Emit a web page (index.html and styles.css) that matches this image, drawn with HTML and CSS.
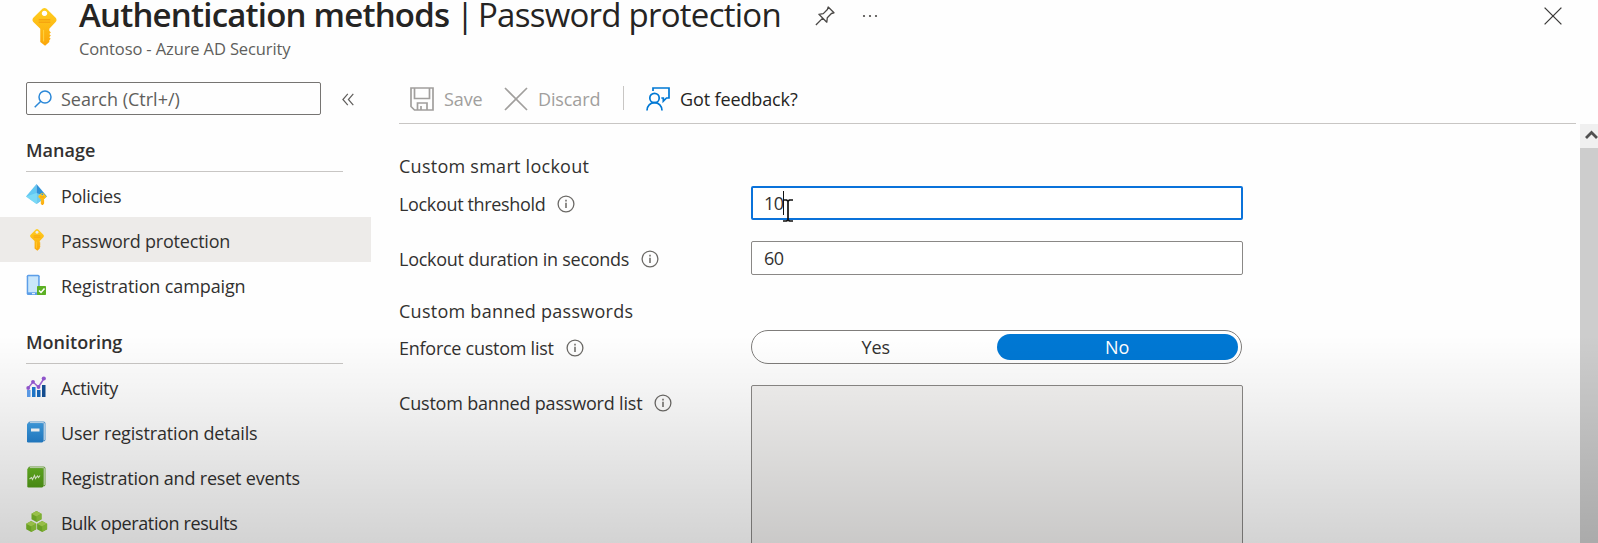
FILE: index.html
```html
<!DOCTYPE html>
<html lang="en">
<head>
<meta charset="utf-8">
<title>Authentication methods | Password protection</title>
<link rel="stylesheet" href="styles.css">
</head>
<body>
<svg class="defs" width="0" height="0">
  <defs>
    <linearGradient id="gold" x1="0" y1="0" x2="0" y2="1"><stop offset="0" stop-color="#ffce1f"/><stop offset="1" stop-color="#fba60a"/></linearGradient>
    <linearGradient id="blue" x1="0" y1="0" x2="0" y2="1"><stop offset="0" stop-color="#3f9fe4"/><stop offset="1" stop-color="#2380cd"/></linearGradient>
    <linearGradient id="green" x1="0" y1="0" x2="0" y2="1"><stop offset="0" stop-color="#66b522"/><stop offset="1" stop-color="#519a17"/></linearGradient>
    <symbol id="key" viewBox="0 0 26 40">
      <path fill="url(#gold)" fill-rule="evenodd" d="M10.800 1 Q13 -.6 15.200 1 L24.600 10.400 Q26.400 12.600 24.600 14.800 L18 21.800 V24 L19.600 25.600 L18 27.200 L19.600 28.900 L18 30.600 L19.400 32.200 L18 33.800 V35.600 L13.600 39.600 L8.600 35.600 V21.800 L1.400 14.800 Q-.4 12.600 1.400 10.400 Z M13 3 a2.800 2.800 0 1 0 .01 0Z"/>
      <path stroke="#f6a50f" stroke-width="1.600" d="M7 12.400H19M7 15H19"/>
      <path stroke="#ffcf3c" stroke-width="1.200" d="M12 23V35"/>
    </symbol>
    <symbol id="info" viewBox="0 0 18 18">
      <circle cx="9" cy="9" r="7.900" fill="none" stroke="#6b6966" stroke-width="1.300"/>
      <path d="M9 7.700V13M9 4.800V6.400" stroke="#7b7976" stroke-width="1.700"/>
    </symbol>
  </defs>
</svg>
<div class="blade">
  <header class="header">
    <svg class="header-key"><use href="#key"/></svg>
    <div class="heading">
      <h1 class="title"><span class="title-strong">Authentication methods</span><span class="title-bar">|</span><span class="title-page">Password protection</span></h1>
      <p class="subtitle">Contoso - Azure AD Security</p>
    </div>
    <svg class="pin" viewBox="0 0 20 20" fill="none" stroke="#4a4846" stroke-width="1.300" stroke-linejoin="round"><path d="M13.200 1 19 6.800 16.400 7.500 12.300 11.700 11.800 16.200 3.900 8.300 8.300 7.600 12.400 3.500ZM7.700 12.100 .9 19"/></svg>
    <svg class="dots" viewBox="0 0 16 4" fill="#4a4846"><circle cx="2" cy="2" r="1.100"/><circle cx="8" cy="2" r="1.100"/><circle cx="14" cy="2" r="1.100"/></svg>
    <svg class="close" viewBox="0 0 18 18" stroke="#3b3a39" stroke-width="1.300"><path d="M.6.600 17.400 17.400M17.400.6.600 17.400"/></svg>
  </header>

  <div class="body">
    <nav class="sidebar">
      <div class="search-row">
        <div class="search">
          <svg class="search-icon" viewBox="0 0 18 18" fill="none" stroke="#2b88d8" stroke-width="1.500"><circle cx="11" cy="7" r="6"/><path d="M6.800 11.200.7 17.300"/></svg>
          <span class="search-text">Search (Ctrl+/)</span>
        </div>
        <svg class="collapse" viewBox="0 0 12 13" fill="none" stroke="#605e5c" stroke-width="1.200"><path d="M5.800.8.900 6.500 5.800 12.200M11.300.8 6.400 6.500 11.300 12.200"/></svg>
      </div>

      <h2 class="group">Manage</h2>
      <ul class="menu">
        <li class="item"><svg class="icon" viewBox="0 0 22 22"><path d="M10.500 0 0 12.500 10.500 20Z" fill="#62c8f2"/><path d="M10.500 0 21 12.500 10.500 20Z" fill="#2f91d8"/><path d="M0 12.500 10.500 9 21 12.500 10.500 20Z" fill="#83dff7" opacity=".75"/><svg x="11.500" y="8.500" width="9.500" height="13"><use href="#key"/></svg></svg><span class="t-policies">Policies</span></li>
        <li class="item selected"><svg class="icon"><use href="#key"/></svg><span class="t-pp">Password protection</span></li>
        <li class="item"><svg class="icon" viewBox="0 0 22 22"><rect x=".7" y=".7" width="13" height="20.300" rx="1.500" fill="#5c9ee8"/><rect x="2.200" y="2.300" width="10" height="16" fill="#c9e6fb"/><path d="M6 19.700H9" stroke="#fff"/><rect x="11" y="12" width="9" height="9" rx=".7" fill="#5cb024"/><path d="m13 16.500 2 2 3.500-4" fill="none" stroke="#fff" stroke-width="1.500"/></svg><span class="t-campaign">Registration campaign</span></li>
      </ul>

      <h2 class="group monitoring">Monitoring</h2>
      <ul class="menu">
        <li class="item"><svg class="icon" viewBox="0 0 22 22"><path d="M1 14h3.500v7H1z" fill="#5ea0ef"/><path d="M6 11h3.500v10H6z" fill="#1f7ad0"/><path d="M11 14h3.500v7H11z" fill="#1769bd"/><path d="M16 9h3.500v12H16z" fill="#134f95"/><path d="M2 12 7 6 12.500 11 18 2.500" fill="none" stroke="#a067d8" stroke-width="1.500"/><g fill="#9457d2"><circle cx="2.200" cy="12" r="1.900"/><circle cx="7" cy="5.800" r="1.900"/><circle cx="12.500" cy="11" r="1.900"/><circle cx="17.800" cy="2.500" r="2.100"/></g></svg><span class="t-activity">Activity</span></li>
        <li class="item"><svg class="icon" viewBox="0 0 22 22"><rect x="2" y=".5" width="17.500" height="20" rx="2" fill="#5b9fd8"/><path d="M4 1.700h13.500q.8 0 .8.800V19" fill="none" stroke="#d6eafa"/><rect x="1" y="2.200" width="16" height="19.300" rx="1.200" fill="url(#blue)"/><path d="M5 9h8.500" stroke="#fff" stroke-width="3"/></svg><span class="t-user">User registration details</span></li>
        <li class="item"><svg class="icon" viewBox="0 0 22 22"><rect x="2" y=".5" width="17.500" height="20" rx="2" fill="#76b046"/><path d="M4 1.700h13.500q.8 0 .8.800V19" fill="none" stroke="#dceccb"/><rect x="1.300" y="2.200" width="15.700" height="19.300" rx="1.200" fill="url(#green)"/><path d="m3.500 13 2-1.500 1 2 2-4 1 3 2-2.500 1 1.500 1.500-2" fill="none" stroke="#e9f7d9" stroke-width="1.100"/></svg><span class="t-reg">Registration and reset events</span></li>
        <li class="item"><svg class="icon" viewBox="0 0 22 22"><g id="cube"><path d="m10.500 0 5 2.700v5.600l-5 2.700-5-2.700V2.700Z" fill="#7dbd2b"/><path d="m10.500 0 5 2.700-5 2.800-5-2.800Z" fill="#b2df55"/><path d="m10.500 5.500 5-2.800v5.600l-5 2.700Z" fill="#94ce3c"/></g><use href="#cube" x="-5.300" y="10"/><use href="#cube" x="5.600" y="10"/></svg><span class="t-bulk">Bulk operation results</span></li>
      </ul>
    </nav>

    <main class="main">
      <div class="toolbar">
        <div class="command disabled"><svg class="cmd-icon" viewBox="0 0 24 24" fill="none" stroke="#a19f9d" stroke-width="1.700"><path d="M1 1h22v22H4.500L1 19.500ZM4.500 1v10.500h15V1M7.500 23v-7h9.500v7M11 19v4"/></svg><span>Save</span></div>
        <div class="command disabled discard"><svg class="cmd-icon" viewBox="0 0 24 24" stroke="#a19f9d" stroke-width="1.700"><path d="m1 1 22 22M23 1 1 23"/></svg><span>Discard</span></div>
        <div class="divider"></div>
        <div class="command"><svg class="cmd-icon" viewBox="0 0 24 24" fill="none" stroke="#0078d4" stroke-width="1.700"><circle cx="8.500" cy="11" r="4.700"/><path d="M1 23.500c0-4.700 3.300-7.800 7.500-7.800s7.500 3.100 7.500 7.800M7 4V1h16v10h-2.500l-3.200 3.200V11h-2"/></svg><span>Got feedback?</span></div>
      </div>

      <div class="form">
        <h3 class="section s-lockout">Custom smart lockout</h3>
        <div class="field f-threshold">
          <label class="label"><span class="t-threshold">Lockout threshold</span><svg class="info"><use href="#info"/></svg></label>
          <div class="input focused"><span class="value">10</span><i class="caret"></i>
            <svg class="ibeam" viewBox="0 0 10 23" fill="none" stroke="#111" stroke-width="1.700"><path d="M0 1H3.500L5 2 6.500 1H10M5 2V21M0 22H3.500L5 21 6.500 22H10"/></svg>
          </div>
        </div>
        <div class="field f-duration">
          <label class="label"><span class="t-duration">Lockout duration in seconds</span><svg class="info"><use href="#info"/></svg></label>
          <div class="input"><span class="value">60</span></div>
        </div>
        <h3 class="section s-banned">Custom banned passwords</h3>
        <div class="field f-enforce">
          <label class="label"><span class="t-enforce">Enforce custom list</span><svg class="info"><use href="#info"/></svg></label>
          <div class="toggle"><span class="option">Yes</span><span class="option on">No</span></div>
        </div>
        <div class="field f-list">
          <label class="label"><span class="t-list">Custom banned password list</span><svg class="info"><use href="#info"/></svg></label>
          <div class="textarea"></div>
        </div>
      </div>
    </main>

    <div class="scrollbar"><div class="scroll-up"><svg class="scroll-arrow" viewBox="0 0 13 9" fill="none" stroke="#505050" stroke-width="2.800"><path d="m1 8 5.500-5.500L12 8"/></svg></div></div>
  </div>
  <div class="shade"></div>
</div>
</body>
</html>
```
FILE: styles.css
```css
* { box-sizing: border-box; }
body { margin: 0; background: #fff; color: #323130; font: 18px/24px "Open Sans", "Noto Sans", sans-serif; overflow: hidden; }
h1, h2, h3, p, ul { margin: 0; padding: 0; }
svg { display: block; flex: none; }
span { white-space: nowrap; }
.defs { position: absolute; }
.blade { position: relative; height: 543px; overflow: hidden; display: flex; flex-direction: column; background: #fefefe; }

.header { display: flex; height: 82px; padding-left: 32px; flex: none; }
.header-key { width: 25px; height: 40px; margin: 7px 1px 0 0; }
.heading { width: 722px; margin-left: 21px; }
.title { display: flex; font-size: 33px; line-height: 30px; font-weight: 400; color: #252423; }
.title-strong { width: 377px; font-weight: 600; letter-spacing: -.8px; }
.title-bar { width: 22px; }
.title-page { letter-spacing: -.75px; }
.subtitle { margin-top: 5px; font-size: 16.500px; line-height: 28px; color: #605e5c; letter-spacing: -.12px; }
.pin { width: 20px; height: 20px; margin: 6px 0 0 14px; }
.dots { width: 16px; height: 4px; margin: 14px 0 0 27px; }
.close { width: 18px; height: 18px; margin: 7px 36px 0 auto; }

.body { display: flex; flex: 1; }
.sidebar { width: 371px; flex: none; }
.search-row { display: flex; align-items: center; height: 33px; padding-left: 26px; }
.search { display: flex; align-items: center; width: 295px; height: 33px; padding-left: 7px; border: 1px solid #767472; border-radius: 2px; }
.search-icon { width: 18px; height: 18px; }
.search-text { margin-left: 9px; padding-top: 1px; color: #605e5c; }
.collapse { width: 12px; height: 13px; margin: 2px 0 0 21px; }
.group { height: 57px; width: 317px; margin-left: 26px; padding-top: 23px; border-bottom: 1px solid #c8c6c4; font-size: 18px; font-weight: 600; letter-spacing: 0; }
.menu { list-style: none; }
.item { display: flex; align-items: center; height: 45px; padding-left: 26px; letter-spacing: -.2px; }
.item span { margin-left: 13px; padding-top: 2px; }
.item .t-policies { letter-spacing: -.3px; }
.item .t-campaign { letter-spacing: -.12px; }
.item .t-activity, .item .t-bulk { letter-spacing: -.38px; }
.item .t-user { letter-spacing: -.17px; }
.icon { width: 22px; height: 22px; }
.selected { background: #edebe9; }

.main { width: 1177px; margin-left: 28px; flex: none; }
.toolbar { display: flex; align-items: flex-start; height: 42px; padding: 4px 0 0 11px; border-bottom: 1px solid #c8c6c4; }
.command { display: flex; align-items: center; color: #252423; letter-spacing: -.12px; }
.command span { padding-top: 1px; }
.disabled { color: #a19f9d; }
.cmd-icon { width: 24px; height: 24px; margin-right: 10px; }
.command:first-child { width: 94px; }
.discard { width: 119px; }
.divider { width: 1px; height: 24px; margin-right: 22px; background: #c8c6c4; }

.form { display: flex; flex-direction: column; }
.section { font-size: 18px; font-weight: 400; height: 24px; letter-spacing: .26px; }
.s-lockout { margin-top: 30px; }
.field { display: flex; align-items: flex-start; }
.label { display: flex; align-items: center; width: 352px; height: 35px; }
.info { width: 18px; height: 18px; margin-left: 12px; }
.t-threshold { letter-spacing: -.34px; }
.t-duration { letter-spacing: -.26px; }
.t-enforce { letter-spacing: -.26px; }
.t-list { letter-spacing: -.19px; }
.f-threshold { height: 34px; margin-top: 8px; }
.f-duration { height: 34px; margin-top: 21px; }
.s-banned { margin-top: 24px; }
.f-enforce { height: 34px; margin-top: 7px; }
.f-list { margin-top: 21px; }
.input { position: relative; display: flex; align-items: center; width: 492px; height: 34px; padding-left: 12px; border: 1px solid #8a8886; border-radius: 2px; background: #fff; }
.focused { padding-left: 11px; border: 2px solid #0a72da; }
.value { letter-spacing: -.6px; }
.caret { width: 1px; height: 24px; background: #111; }
.ibeam { position: absolute; left: 30px; top: 11px; width: 10px; height: 23px; }
.toggle { display: flex; width: 491px; height: 34px; padding: 3px; border: 1px solid #7f7d7b; border-radius: 17px; background: #fff; }
.option { flex: 1; text-align: center; line-height: 27px; border-radius: 13px; }
.on { background: #0078d4; color: #fff; }
.textarea { width: 492px; height: 200px; border: 1px solid #8a8886; border-radius: 2px; background: #f3f2f1; }

.scrollbar { width: 18px; height: 419px; margin: 42px 0 0 auto; background: #cdcdcd; overflow: hidden; }
.scroll-up { height: 24px; padding: 6px 0 0 5px; background: #f0f0f0; }
.scroll-arrow { width: 13px; height: 9px; }
.shade { position: absolute; inset: 335px 0 0; background: linear-gradient(rgba(0,0,0,0), rgba(0,0,0,.04) 24%, rgba(0,0,0,.17)); pointer-events: none; }
```
